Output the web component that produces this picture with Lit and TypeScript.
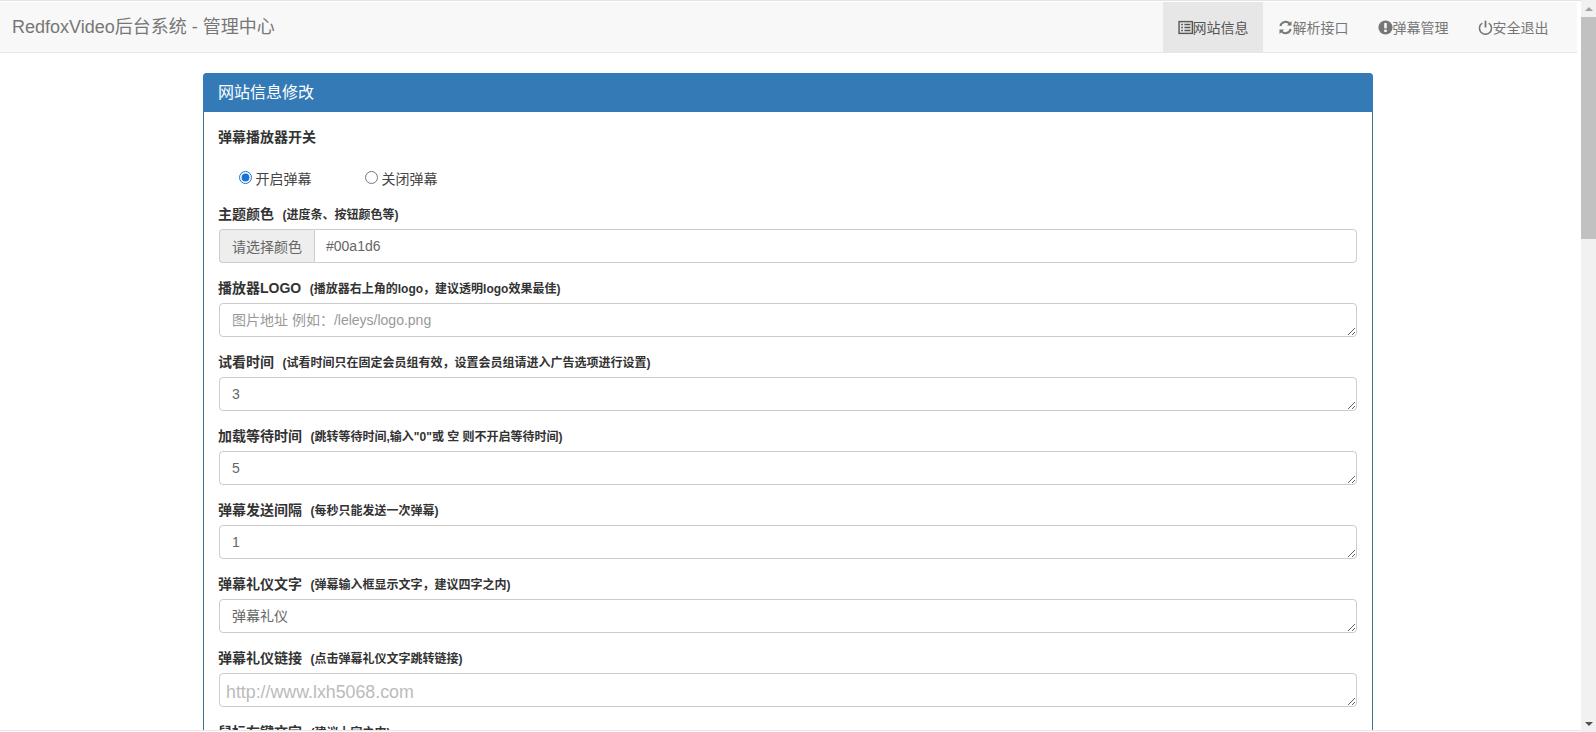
import { LitElement, html, css, svg } from "lit";
import { customElement } from "lit/decorators.js";

const fields = [
  { label: "试看时间", hint: "(试看时间只在固定会员组有效，设置会员组请进入广告选项进行设置)", value: "3" },
  { label: "加载等待时间", hint: "(跳转等待时间,输入\"0\"或 空 则不开启等待时间)", value: "5" },
  { label: "弹幕发送间隔", hint: "(每秒只能发送一次弹幕)", value: "1" },
  { label: "弹幕礼仪文字", hint: "(弹幕输入框显示文字，建议四字之内)", value: "弹幕礼仪" },
];

const icons = {
  list: svg`<rect x="1" y="1.5" width="12.4" height="11" fill="none" stroke="currentColor" stroke-width="1.3"/><path d="M3 4.2h1.6M3 7h1.6M3 9.8h1.6M6 4.2h5.6M6 7h5.6M6 9.8h5.6" stroke="currentColor" stroke-width="1.4"/>`,
  refresh: svg`<path d="M2.2 5.6A5 5 0 0 1 11 3.6M11.8 8.4A5 5 0 0 1 3 10.4" fill="none" stroke="currentColor" stroke-width="1.9"/><path d="M12.6 1v4.2H8.4zM1.4 13V8.8h4.2z" fill="currentColor"/>`,
  info: svg`<circle cx="7" cy="7" r="6.6" fill="currentColor"/><rect x="5.8" y="2.8" width="2.4" height="5" fill="#f8f8f8"/><rect x="5.8" y="9" width="2.4" height="2.2" fill="#f8f8f8"/>`,
  power: svg`<path d="M4 3a5.6 5.6 0 1 0 6 0" fill="none" stroke="currentColor" stroke-width="1.4"/><path d="M7 .6v6.4" stroke="currentColor" stroke-width="1.7"/>`,
};

@customElement("app-root")
export class AppRoot extends LitElement {
  static styles = css`
    :host { display: flex; height: 732px; overflow: hidden; background: #fff; color: #333;
      font-family: "Liberation Sans", "Noto Sans CJK SC", sans-serif; font-size: 14px; }
    * { box-sizing: border-box; }
    .page { flex: 1; min-width: 0; display: flex; flex-direction: column; height: 731px; overflow: hidden; border-top: 1px solid #e4e4e4; border-bottom: 1px solid #e8e8e8; padding-right: 4px; padding-top: 1px; }
    .navbar { flex: none; height: 51px; display: flex; justify-content: space-between; background: #f8f8f8; border-bottom: 1px solid #e7e7e7; }
    .brand { color: #777; font-size: 18px; line-height: 50px; padding-left: 12px; }
    .nav { display: flex; padding-right: 14px; }
    .nav a { display: flex; align-items: center; color: #777; font-size: 14px; height: 50px; padding: 0 14.5px; }
    .nav a.active { background: #e7e7e7; color: #555; }
    .nav svg { width: 15px; height: 15px; flex: none; }
    .panel { width: 1170px; margin: 20px 0 0 203px; border: 1px solid #3b7590; border-radius: 4px 4px 0 0; flex: none; }
    .head { background: #337ab7; color: #fff; font-size: 16px; height: 39px; line-height: 40px; padding-left: 15px; margin: -1px -1px 0; border-radius: 4px 4px 0 0; }
    .body { padding: 15px 15px 0; }
    label.t { display: block; font-weight: 700; line-height: 20px; height: 20px; margin: 0 0 5px -1px; }
    label.t small { font-size: 12px; font-weight: 700; margin-left: 8.5px; }
    .radios { display: flex; height: 20px; margin: 20px 0 17px; padding-left: 20px; }
    .radios label { display: flex; align-items: center; width: 126px; font-size: 14px; color: #444; gap: 3.5px; }
    .radios input { margin: 0; width: 13px; height: 13px; accent-color: #1a73d0; }
    .radios label span { padding-top: 2px; }
    .group { margin-bottom: 15px; }
    .ig { display: flex; height: 34px; }
    .addon { flex: none; width: 95px; display: flex; align-items: center; justify-content: center; background: #eee; color: #666; border: 1px solid #ccc; border-right: 0; border-radius: 4px 0 0 4px; font-size: 14px; }
    .ig input { flex: 1; min-width: 0; height: 34px; border: 1px solid #ccc; border-radius: 0 4px 4px 0; padding: 6px 11px; font: inherit; color: #666; outline: none; }
    textarea { display: block; width: 100%; height: 34px; border: 1px solid #ccc; border-radius: 4px; padding: 6px 12px; font: inherit; line-height: 20px; color: #666; outline: none; resize: vertical; overflow: hidden; }
    textarea::placeholder { color: #999; opacity: 1; }
    textarea.url { padding: 7px 6px 5px; font-size: 17.8px; line-height: 22px; }
    textarea.url::placeholder { color: #bbb; }
    .bar { flex: none; width: 15px; background: #f1f1f1; display: flex; flex-direction: column; align-items: center; justify-content: space-between; }
    .btn { flex: none; height: 17px; display: flex; align-items: center; justify-content: center; }
    .arrow { width: 0; height: 0; border-left: 4px solid transparent; border-right: 4px solid transparent; }
    .up { border-bottom: 4px solid #a3a3a3; }
    .down { border-top: 4px solid #505050; }
    .track { flex: 1; width: 100%; }
    .thumb { width: 100%; height: 222px; background: #c1c1c1; }
  `;

  private row(label: string, hint: string, value: string, placeholder = "", cls = "") {
    return html`<div class="group">
      <label class="t">${label}<small>${hint}</small></label>
      <textarea class=${cls} .value=${value} placeholder=${placeholder}></textarea>
    </div>`;
  }

  render() {
    return html`
      <div class="page">
        <nav class="navbar">
          <div class="brand">RedfoxVideo后台系统 - 管理中心</div>
          <div class="nav">
            <a class="active"><svg viewBox="0 0 14 14">${icons.list}</svg>网站信息</a>
            <a><svg viewBox="0 0 14 14">${icons.refresh}</svg>解析接口</a>
            <a><svg viewBox="0 0 14 14">${icons.info}</svg>弹幕管理</a>
            <a><svg viewBox="0 0 14 14">${icons.power}</svg>安全退出</a>
          </div>
        </nav>
        <section class="panel">
          <div class="head">网站信息修改</div>
          <div class="body">
            <label class="t">弹幕播放器开关</label>
            <div class="radios">
              <label><input type="radio" name="dm" checked /><span>开启弹幕</span></label>
              <label><input type="radio" name="dm" /><span>关闭弹幕</span></label>
            </div>
            <div class="group">
              <label class="t">主题颜色<small>(进度条、按钮颜色等)</small></label>
              <div class="ig"><span class="addon">请选择颜色</span><input .value=${"#00a1d6"} /></div>
            </div>
            ${this.row("播放器LOGO", "(播放器右上角的logo，建议透明logo效果最佳)", "", "图片地址 例如：/leleys/logo.png")}
            ${fields.map((f) => this.row(f.label, f.hint, f.value))}
            ${this.row("弹幕礼仪链接", "(点击弹幕礼仪文字跳转链接)", "", "http://www.lxh5068.com", "url")}
            ${this.row("鼠标右键文字", "(建议上字之内)", "")}
          </div>
        </section>
      </div>
      <aside class="bar">
        <div class="btn"><span class="arrow up"></span></div>
        <div class="track"><div class="thumb"></div></div>
        <div class="btn"><span class="arrow down"></span></div>
      </aside>
    `;
  }
}
